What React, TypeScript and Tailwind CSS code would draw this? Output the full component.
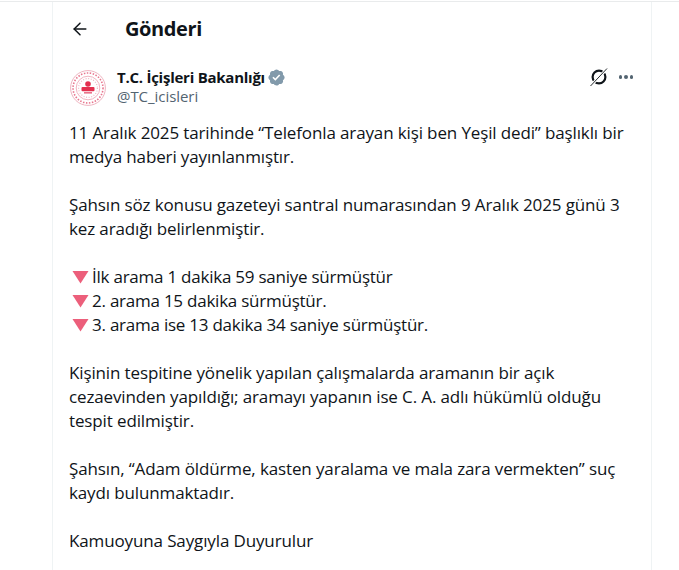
import { ArrowLeft } from 'lucide-react';

function Triangle() {
    return (
        <svg viewBox="0 0 17 17" className="inline-block w-[17px] h-[17px] ml-[3px] mr-[3px] align-[-2px]">
            <path d="M0.5 3 H16.5 L8.5 15.5 Z" fill="#ec5f7b" />
        </svg>
    );
}

function Seal() {
    return (
        <svg viewBox="0 0 36 36" className="w-[36px] h-[36px]">
            <circle cx="18" cy="18" r="17.4" fill="#fff" stroke="#eeb4c0" strokeWidth="1" />
            <circle cx="18" cy="18" r="15" fill="none" stroke="#e8768e" strokeWidth="1.6" strokeDasharray="1.5 1.5" />
            <circle cx="18" cy="18" r="11.8" fill="#fff" stroke="#ee9fb0" strokeWidth="0.8" />
            <circle cx="18" cy="18" r="9.4" fill="none" stroke="#f0b6c2" strokeWidth="1.2" strokeDasharray="1 1.6" />
            <circle cx="18" cy="14" r="2.8" fill="#e3304f" />
            <rect x="11.5" y="17" width="13" height="4.2" rx="1" fill="#e3304f" />
            <rect x="14" y="22" width="8" height="1.6" fill="#ea7188" />
        </svg>
    );
}

function Verified() {
    return (
        <svg viewBox="0 0 22 22" className="w-[19px] h-[19px] ml-[2px]">
            <path
                fill="#829aab"
                d="M20.396 11c-.018-.646-.215-1.275-.57-1.816-.354-.54-.852-.972-1.438-1.246.223-.607.27-1.264.14-1.897-.131-.634-.437-1.218-.882-1.687-.47-.445-1.053-.75-1.687-.882-.633-.13-1.29-.083-1.897.14-.273-.587-.704-1.086-1.245-1.44S11.647 1.62 11 1.604c-.646.017-1.273.213-1.813.568s-.969.854-1.24 1.44c-.608-.223-1.267-.272-1.902-.14-.635.13-1.22.436-1.69.882-.445.47-.749 1.055-.878 1.688-.13.633-.08 1.29.144 1.896-.587.274-1.087.705-1.443 1.245-.356.54-.555 1.17-.574 1.817.02.647.218 1.276.574 1.817.356.54.856.972 1.443 1.245-.224.606-.274 1.263-.144 1.896.13.634.433 1.218.877 1.688.47.443 1.054.747 1.687.878.633.132 1.29.084 1.897-.136.274.586.705 1.084 1.246 1.439.54.354 1.17.551 1.816.569.647-.016 1.276-.213 1.817-.567s.972-.854 1.245-1.44c.604.239 1.266.296 1.903.164.636-.132 1.22-.447 1.68-.907.46-.46.776-1.044.908-1.681s.075-1.299-.165-1.903c.586-.274 1.084-.705 1.439-1.246.354-.54.551-1.17.569-1.816z"
            />
            <path fill="#fff" d="M9.662 14.85l-3.429-3.428 1.293-1.302 2.072 2.072 4.4-4.794 1.347 1.246z" />
        </svg>
    );
}

function Grok() {
    return (
        <svg viewBox="0 0 20 20" className="w-[20px] h-[20px] text-[#0f1419]">
            <circle cx="10" cy="10" r="6.4" fill="none" stroke="currentColor" strokeWidth="2.2" />
            <path d="M1.5 19 L18.5 1.2" stroke="#fff" strokeWidth="2.8" />
            <path d="M1.5 19 L18 1.5" stroke="currentColor" strokeWidth="0.9" />
        </svg>
    );
}

export default function App() {
    return (
        <div className="h-[570px] w-[679px] overflow-hidden bg-white font-['Open_Sans','Noto_Sans',sans-serif] pt-px">
            <div className="h-px bg-[#e9ebec]" />
            <div className="ml-[52px] w-[600px] h-[568px] border-x border-[#eff3f4]">
                <div className="flex items-center h-[53px] pl-[17px]">
                    <ArrowLeft size={20} strokeWidth={1.8} className="text-[#0f1419]" />
                    <h1 className="ml-[35px] text-[20px] leading-6 font-bold text-[#0f1419] tracking-[-0.4px]">Gönderi</h1>
                </div>
                <div className="pl-[17px] pr-[17px] pt-[12px]">
                    <div className="flex items-start">
                        <div className="pt-[3px] mr-[11px]">
                            <Seal />
                        </div>
                        <div className="flex-1">
                            <div className="flex items-center h-[20px] text-[15px] font-bold text-[#0f1419] tracking-[-0.25px]">
                                T.C. İçişleri Bakanlığı
                                <Verified />
                            </div>
                            <div className="-mt-px text-[15px] leading-5 text-[#536471] tracking-[-0.05px]">@TC_icisleri</div>
                        </div>
                        <div className="flex items-center">
                            <Grok />
                            <div className="ml-[10px] mr-[1px] flex gap-[2px]">
                                <span className="w-[3.5px] h-[3.5px] rounded-full bg-[#536471]" />
                                <span className="w-[3.5px] h-[3.5px] rounded-full bg-[#536471]" />
                                <span className="w-[3.5px] h-[3.5px] rounded-full bg-[#536471]" />
                            </div>
                        </div>
                    </div>
                    <div className="mt-[15px] -ml-px text-[17px] leading-6 text-[#0f1419] tracking-[-0.13px]">
                        <p>11 Aralık 2025 tarihinde “Telefonla arayan kişi ben Yeşil dedi” başlıklı bir<br />medya haberi yayınlanmıştır.</p>
                        <p className="mt-6">Şahsın söz konusu gazeteyi santral numarasından 9 Aralık 2025 günü 3<br />kez aradığı belirlenmiştir.</p>
                        <p className="mt-6 tracking-[-0.24px]">
                            <Triangle />İlk arama 1 dakika 59 saniye sürmüştür<br />
                            <Triangle />2. arama 15 dakika sürmüştür.<br />
                            <Triangle />3. arama ise 13 dakika 34 saniye sürmüştür.
                        </p>
                        <p className="mt-6">Kişinin tespitine yönelik yapılan çalışmalarda aramanın bir açık<br />cezaevinden yapıldığı; aramayı yapanın ise C. A. adlı hükümlü olduğu<br />tespit edilmiştir.</p>
                        <p className="mt-6">Şahsın, “Adam öldürme, kasten yaralama ve mala zara vermekten” suç<br />kaydı bulunmaktadır.</p>
                        <p className="mt-6">Kamuoyuna Saygıyla Duyurulur</p>
                    </div>
                </div>
            </div>
        </div>
    );
}
